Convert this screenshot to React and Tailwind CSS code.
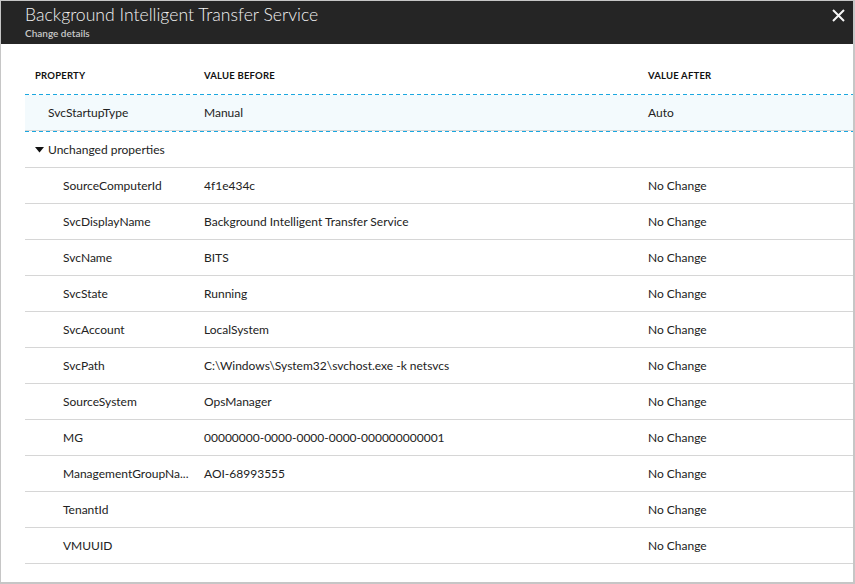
import React from 'react';

const rows = [
  ['SourceComputerId', '4f1e434c'],
  ['SvcDisplayName', 'Background Intelligent Transfer Service'],
  ['SvcName', 'BITS'],
  ['SvcState', 'Running'],
  ['SvcAccount', 'LocalSystem'],
  ['SvcPath', 'C:\\Windows\\System32\\svchost.exe -k netsvcs'],
  ['SourceSystem', 'OpsManager'],
  ['MG', '00000000-0000-0000-0000-000000000001'],
  ['ManagementGroupNa...', 'AOI-68993555'],
  ['TenantId', ''],
  ['VMUUID', ''],
];

const Dashed = () => (
  <div className="h-px bg-[repeating-linear-gradient(90deg,#1aa7e0_0_4px,transparent_4px_7px)]" />
);

export default function App() {
  return (
    <div
      className="w-[855px] h-[584px] bg-white border-t border-l border-r-2 border-b-2 border-[#c6c6c6] flex flex-col text-[#222]"
      style={{ fontFamily: 'Lato, "Open Sans", sans-serif' }}
    >
      {/* Header */}
      <div className="h-[43px] bg-[#252525] flex items-start justify-between pl-[24px] pr-[8px]">
        <div className="pt-[2px]">
          <div className="text-[17.6px] font-light leading-[24px] text-[#f2f2f2]">
            Background Intelligent Transfer Service
          </div>
          <div className="text-[10px] font-semibold leading-[12px] text-[#c8c8c8]">Change details</div>
        </div>
        <button className="mt-[7px] w-[14px] h-[14px] flex items-center justify-center">
          <svg width="13" height="13" viewBox="0 0 13 13">
            <path d="M1 1 L12 12 M12 1 L1 12" stroke="#f5f5f5" strokeWidth="2" />
          </svg>
        </button>
      </div>

      {/* Table */}
      <div className="ml-[24px] flex flex-col text-[12px]">
        <div className="h-[50px] flex items-end pb-[11px] text-[9.5px] font-bold text-[#111] tracking-[0.2px]">
          <div className="w-[179px] pl-[10px]">PROPERTY</div>
          <div className="w-[444px]">VALUE BEFORE</div>
          <div>VALUE AFTER</div>
        </div>

        <Dashed />
        <div className="h-[36px] bg-[#f3fafd] border-b border-[#d6d6d6] flex items-center">
          <div className="w-[179px] pl-[23px]">SvcStartupType</div>
          <div className="w-[444px]">Manual</div>
          <div>Auto</div>
        </div>
        <Dashed />

        <div className="h-[36px] border-b border-[#d6d6d6] flex items-center pl-[10px] gap-[4px]">
          <svg width="9" height="6" viewBox="0 0 9 6">
            <path d="M0 0 H9 L4.5 5.5 Z" fill="#111" />
          </svg>
          <span>Unchanged properties</span>
        </div>

        {rows.map(([name, before]) => (
          <div key={name} className="h-[36px] border-b border-[#d6d6d6] flex items-center">
            <div className="w-[179px] pl-[38px] pr-[6px] truncate">{name}</div>
            <div className="w-[444px]">{before}</div>
            <div>No Change</div>
          </div>
        ))}
      </div>
    </div>
  );
}
